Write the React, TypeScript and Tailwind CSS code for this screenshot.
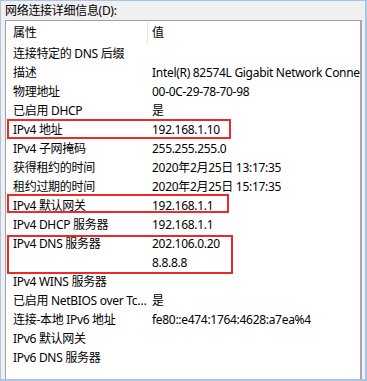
import React from 'react';

interface Row {
  name: string;
  value: string;
}

const rows: Row[] = [
  { name: '连接特定的 DNS 后缀', value: '' },
  { name: '描述', value: 'Intel(R) 82574L Gigabit Network Connection' },
  { name: '物理地址', value: '00-0C-29-78-70-98' },
  { name: '已启用 DHCP', value: '是' },
  { name: 'IPv4 地址', value: '192.168.1.10' },
  { name: 'IPv4 子网掩码', value: '255.255.255.0' },
  { name: '获得租约的时间', value: '2020年2月25日 13:17:35' },
  { name: '租约过期的时间', value: '2020年2月25日 15:17:35' },
  { name: 'IPv4 默认网关', value: '192.168.1.1' },
  { name: 'IPv4 DHCP 服务器', value: '192.168.1.1' },
  { name: 'IPv4 DNS 服务器', value: '202.106.0.20' },
  { name: '', value: '8.8.8.8' },
  { name: 'IPv4 WINS 服务器', value: '' },
  { name: '已启用 NetBIOS over Tcpip', value: '是' },
  { name: '连接-本地 IPv6 地址', value: 'fe80::e474:1764:4628:a7ea%4' },
  { name: 'IPv6 默认网关', value: '' },
  { name: 'IPv6 DNS 服务器', value: '' },
];

const font = { fontFamily: '"Segoe UI", "Noto Sans", "Noto Sans CJK SC", sans-serif' };

const App = () => {
  return (
    <div
      className="w-[367px] h-[381px] bg-[#f0f0f0] border-t border-l border-r-2 border-b-2 border-[#a9c4e6] overflow-hidden pl-[4px] pr-[3px] flex flex-col text-[12px] tracking-[-0.3px] text-black"
      style={font}
    >
      <div className="h-[19px] flex items-center">网络连接详细信息(D):</div>
      <div className="relative flex-1 bg-white border-t border-l border-r-2 border-t-[#a0a0a0] border-l-[#a0a0a0] border-r-[#a8a8a8] overflow-hidden">
        <div className="h-[23px] flex items-center">
          <div className="w-[141px] pl-[7px] shrink-0">属性</div>
          <div className="w-px h-[22px] bg-[#e5e5e5] shrink-0"></div>
          <div className="pl-[4px] whitespace-nowrap">值</div>
        </div>
        {rows.map((row, i) => (
          <div key={i} className="h-[19px] flex items-center whitespace-nowrap">
            <div className="w-[146px] pl-[7px] pr-[4px] shrink-0 overflow-hidden text-ellipsis">
              {row.name}
            </div>
            <div className="whitespace-nowrap">{row.value}</div>
          </div>
        ))}

        {/* annotation boxes */}
        <div className="absolute left-[1px] top-[98px] w-[224px] h-[20px] border-2 border-[#ec2a2a]"></div>
        <div className="absolute left-[1px] top-[173px] w-[222px] h-[19px] border-2 border-[#ec2a2a]"></div>
        <div className="absolute left-[1px] top-[214px] w-[226px] h-[39px] border-2 border-[#ec2a2a]"></div>
      </div>
    </div>
  );
};

export default App;
